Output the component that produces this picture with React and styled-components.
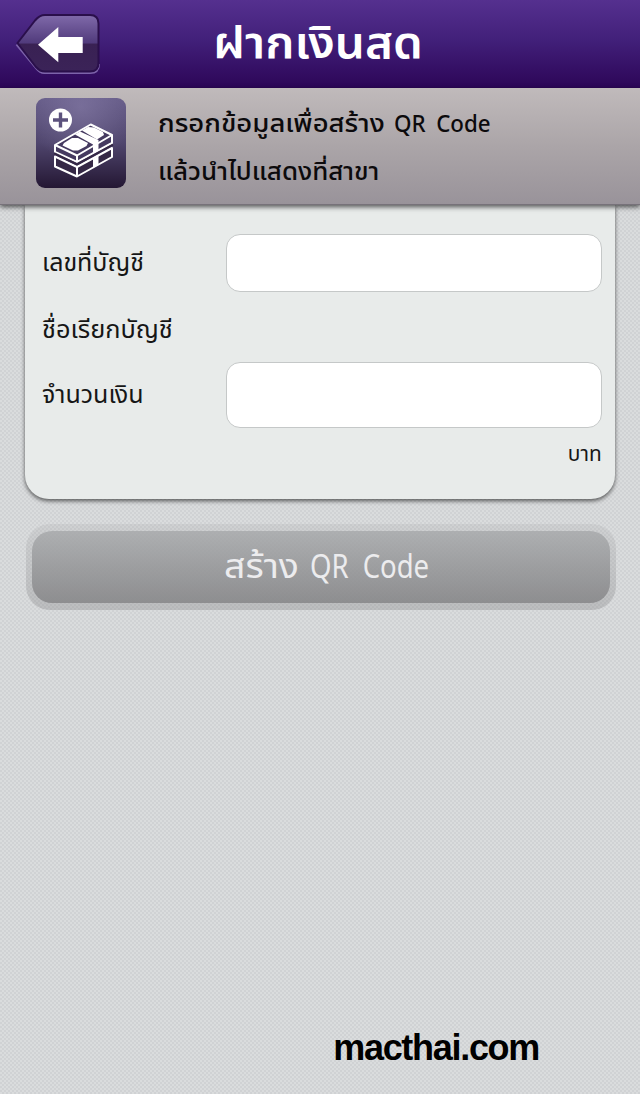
import React, { useState } from 'react';
import styled, { createGlobalStyle } from 'styled-components';

const GlobalStyle = createGlobalStyle`
 *{
     box-sizing:border-box;
 }
 body{
     margin:0;
     font-family:"Noto Sans Thai", "Noto Sans", "Open Sans", sans-serif;
     background:#d5d7d8;
 }
`
//whole screen with the small checked texture
const Screen = styled.main`
 width:640px;
 height:1094px;
 display:flex;
 flex-direction:column;
 overflow:hidden;
 background:conic-gradient(#d0d2d4 25%, #dadcdd 0 50%, #d0d2d4 0 75%, #dadcdd 0) 0 0 / 4px 4px;
`
//one line of text, stretch widens or narrows the letters
const Text = styled.span`
 display:block;
 width:max-content;
 white-space:pre;
 font-size:${props => props.$size}px;
 line-height:${props => props.$line || 40}px;
 font-weight:${props => props.$weight || 400};
 word-spacing:${props => props.$gap || 0}px;
 color:${props => props.$color || "#161616"};
 transform:scaleX(${props => props.$stretch || 1});
 transform-origin:${props => props.$origin || "left"};
`
const Header = styled.header`
 height:88px;
 flex:none;
 display:grid;
 grid-template-columns:100px 1fr 103px;
 justify-items:center;
 background:linear-gradient(#55308f, #42207a 45%, #2c0557);
`
const BackButton = styled.button`
 justify-self:end;
 width:85px;
 height:62px;
 margin-top:13px;
 padding:0;
 border:none;
 background:none;
 cursor:pointer;
 svg{
     display:block;
 }
`
const Title = styled.h1`
 margin:25px 0 0;
`
//grey bar that explains the form
const Notice = styled.section`
 height:117px;
 flex:none;
 display:flex;
 gap:32px;
 padding:10px 36px 0;
 position:relative;
 z-index:2;
 background:linear-gradient(#c0babb, #aba5a8 50%, #99939a);
 border-bottom:1px solid #77727a;
 box-shadow:0 2px 5px rgba(0,0,0,0.65);
`
const NoticeIcon = styled.div`
 width:90px;
 height:90px;
 flex:none;
 border-radius:9px;
 overflow:hidden;
 background:radial-gradient(circle at 50% 10%, rgba(135,125,168,0.6), transparent 60%), linear-gradient(#655b87, #4f456d 50%, #241733);
 svg{
     display:block;
 }
`
const NoticeText = styled.div`
 display:grid;
 grid-template-columns:236px auto;
 grid-template-rows:48px 48px;
 padding-top:2px;
`
const Card = styled.section`
 height:294px;
 flex:none;
 margin:0 25px;
 padding:29px 14px 0 17px;
 display:grid;
 grid-template-columns:184px 376px;
 grid-template-rows:58px 70px 66px 54px;
 align-items:center;
 border-radius:0 0 24px 24px;
 background:#e8ebea;
 box-shadow:0 2px 4px rgba(0,0,0,0.6);
`
const Label = styled.label`
 padding-top:${props => props.$drop || 0}px;
`
const Input = styled.input`
 width:376px;
 height:100%;
 padding:0 16px;
 border:1px solid #c5c8c8;
 border-radius:14px;
 background:#fff;
 font-size:26px;
 outline:none;
`
const Unit = styled.div`
 grid-column:2;
 justify-self:end;
`
const SubmitFrame = styled.div`
 width:590px;
 height:86px;
 flex:none;
 margin:25px 0 0 26px;
 padding:7px 6px;
 border-radius:24px;
 background:linear-gradient(rgba(150,150,152,0.16), rgba(120,120,122,0.3));
`
const Submit = styled.button`
 width:578px;
 height:72px;
 padding:2px 0 0 192px;
 display:grid;
 grid-template-columns:86px auto;
 align-items:center;
 border:none;
 border-radius:20px;
 background:linear-gradient(rgba(166,168,170,0.8), rgba(134,134,136,0.86));
 font-family:inherit;
`
const Watermark = styled.footer`
 margin:auto 101px 24px auto;
 font:bold 36px/44px "Liberation Sans", Arial, sans-serif;
 letter-spacing:-1.3px;
 color:#000;
`

const BackIcon = () => (
    <svg width="85" height="62" viewBox="0 0 85 62">
        <defs>
            <linearGradient id="gloss" x1="0" y1="0" x2="0" y2="1">
                <stop offset="0" stopColor="#806aaa" />
                <stop offset="0.5" stopColor="#503a7b" />
                <stop offset="0.51" stopColor="#392153" />
                <stop offset="1" stopColor="#3b2358" />
            </linearGradient>
        </defs>
        <path d="M1.5 31.5 L21 55 Q25 60 29 60 H75 Q84 60 84 51" fill="none" stroke="#7d63ab" strokeWidth="2" />
        <path d="M2.5 30 L20 7.5 Q24.5 2 30 2 H75 Q83.5 2 83.5 10.5 V50 Q83.5 58.5 75 58.5 H30 Q25 58.5 21 54 Z" fill="url(#gloss)" stroke="#2a0f4b" strokeWidth="2" />
        <path d="M23 31.7 L43.3 14 V24 H67.7 V40 H43.3 V49.3 Z" fill="#fff" />
    </svg>
)

//two bundles of notes with a plus badge
const CashIcon = () => (
    <svg width="90" height="90" viewBox="0 0 90 90">
        <circle cx="24.5" cy="22" r="11.5" fill="#fff" />
        <path d="M24.5 14.5 V29.5 M17 22 H32" stroke="#5c527d" strokeWidth="3.4" />
        <g stroke="#fff" strokeWidth="2" strokeLinejoin="round">
            <path d="M19 58.5 L41 69 L76 50 V59 L41 78.5 L19 68.5 Z" fill="#352846" />
            <path d="M41 69 V78" />
            <path d="M19 47 L54.7 26.5 L76 37 V45 L41 64 L19 54 Z" fill="#453a60" />
            <path d="M19 47 L41 57.5 L76 37 M41 57.5 V63" fill="none" />
        </g>
        <path d="M18 55.3 L41 66.2 L77 46.6" fill="none" stroke="#352846" strokeWidth="2.2" />
        <path d="M46 32.5 L52 29 L58 29.5 L67 34 L68 37 L61 41.5 Z" fill="#fff" />
        <path d="M39 36.5 L44 33.5 L62.5 42 V52.3 L57 55.4 V46.5 Z" fill="#fff" />
        <path d="M26.5 47.5 L28 45 L36 40 L42 40 L52 45 L50.5 48 L42 52.5 L37 52.5 Z" fill="#fff" />
        <path d="M57 61 L62.5 58 V67 L57 70 Z" fill="#fff" />
    </svg>
)

const App = () => {
    const [account, setAccount] = useState('');
    const [amount, setAmount] = useState('');

    return (
        <Screen>
            <GlobalStyle />
            <Header>
                <BackButton aria-label="กลับ"><BackIcon /></BackButton>
                <Title><Text $size={44} $weight={600} $color="#fff" $stretch={1.08} $origin="center">ฝากเงินสด</Text></Title>
            </Header>
            <Notice>
                <NoticeIcon><CashIcon /></NoticeIcon>
                <NoticeText>
                    <Text $size={24} $line={50} $weight={500} $color="#0c0a0c" $stretch={1.145}>กรอกข้อมูลเพื่อสร้าง</Text>
                    <Text $size={23.5} $line={50} $weight={500} $color="#0c0a0c" $stretch={0.95} $gap={5}>QR Code</Text>
                    <Text $size={24} $line={50} $weight={500} $color="#0c0a0c" $stretch={1.08}>แล้วนำไปแสดงที่สาขา</Text>
                </NoticeText>
            </Notice>
            <Card>
                <Label><Text $size={25}>เลขที่บัญชี</Text></Label>
                <Input value={account} onChange={e => setAccount(e.target.value)} />
                <Label $drop={5}><Text $size={25} $stretch={1.015}>ชื่อเรียกบัญชี</Text></Label>
                <span />
                <Label><Text $size={25}>จำนวนเงิน</Text></Label>
                <Input value={amount} onChange={e => setAmount(e.target.value)} />
                <Unit><Text $size={22} $stretch={0.95} $origin="right">บาท</Text></Unit>
            </Card>
            <SubmitFrame>
                <Submit>
                    <Text $size={34} $color="#ececee" $stretch={1.1}>สร้าง</Text>
                    <Text $size={32} $color="#ececee" $weight={400} $stretch={0.86} $gap={8}>QR Code</Text>
                </Submit>
            </SubmitFrame>
            <Watermark>macthai.com</Watermark>
        </Screen>
    )
}

export default App
